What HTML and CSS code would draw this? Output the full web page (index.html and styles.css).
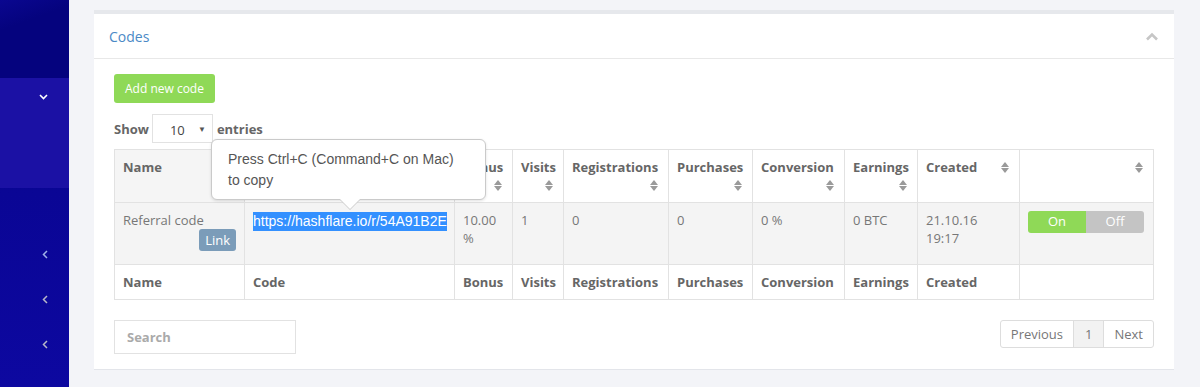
FILE: index.html
```html
<!DOCTYPE html>
<html lang="en">
<head>
    <meta charset="UTF-8">
    <meta name="viewport" content="width=device-width, initial-scale=1.0">
    <title>Codes</title>
    <link rel="stylesheet" href="styles.css">
</head>
<body>

<aside class="sidebar">
    <div class="sidebar-top"></div>
    <div class="nav-active">
        <svg class="chev" width="9" height="6" viewBox="0 0 9 6"><path d="M1 1l3.5 3.5L8 1" fill="none" stroke="#fff" stroke-width="1.6"/></svg>
    </div>
    <div class="nav-list">
        <div class="nav-item"><svg width="6" height="9" viewBox="0 0 6 9"><path d="M5 1L1.5 4.5 5 8" fill="none" stroke="#9fb0e8" stroke-width="1.5"/></svg></div>
        <div class="nav-item"><svg width="6" height="9" viewBox="0 0 6 9"><path d="M5 1L1.5 4.5 5 8" fill="none" stroke="#b7b7c8" stroke-width="1.5"/></svg></div>
        <div class="nav-item"><svg width="6" height="9" viewBox="0 0 6 9"><path d="M5 1L1.5 4.5 5 8" fill="none" stroke="#b7b7c8" stroke-width="1.5"/></svg></div>
    </div>
</aside>

<main class="content">
    <div class="panel">
        <div class="panel-heading">
            <span class="panel-title">Codes</span>
            <svg width="14" height="9" viewBox="0 0 14 9"><path d="M2 7.5l5-5 5 5" fill="none" stroke="#c6c6c6" stroke-width="2.6"/></svg>
        </div>
        <div class="panel-body">
            <button class="btn-add">Add new code</button>

            <div class="length">
                Show
                <span class="select">10 <span class="caret">&#9660;</span></span>
                entries
            </div>

            <div class="table-wrap">
                <table class="codes">
                    <colgroup>
                        <col style="width:130px"><col style="width:210px"><col style="width:58px">
                        <col style="width:51px"><col style="width:105px"><col style="width:84px">
                        <col style="width:92px"><col style="width:73px"><col style="width:102px">
                        <col style="width:134px">
                    </colgroup>
                    <thead>
                        <tr>
                            <th class="sorted">Name</th>
                            <th>Code</th>
                            <th>Bonus <span class="sort block"></span></th>
                            <th>Visits <span class="sort block"></span></th>
                            <th>Registrations <span class="sort block"></span></th>
                            <th>Purchases <span class="sort block"></span></th>
                            <th>Conversion <span class="sort block"></span></th>
                            <th>Earnings <span class="sort block"></span></th>
                            <th><span class="sort side"></span>Created</th>
                            <th><span class="sort side"></span></th>
                        </tr>
                    </thead>
                    <tbody>
                        <tr>
                            <td>Referral code<div class="right"><span class="badge">Link</span></div></td>
                            <td><span class="selected">https://hashflare.io/r/54A91B2E</span></td>
                            <td>10.00 %</td>
                            <td>1</td>
                            <td>0</td>
                            <td>0</td>
                            <td>0 %</td>
                            <td>0 BTC</td>
                            <td>21.10.16 19:17</td>
                            <td><span class="toggle"><span class="on">On</span><span class="off">Off</span></span></td>
                        </tr>
                    </tbody>
                    <tfoot>
                        <tr>
                            <th>Name</th>
                            <th>Code</th>
                            <th>Bonus</th>
                            <th>Visits</th>
                            <th>Registrations</th>
                            <th>Purchases</th>
                            <th>Conversion</th>
                            <th>Earnings</th>
                            <th>Created</th>
                            <th></th>
                        </tr>
                    </tfoot>
                </table>

                <div class="copy-tip">Press Ctrl+C (Command+C on Mac)<br>to copy</div>
            </div>

            <div class="table-footer">
                <input class="search" type="text" placeholder="Search">
                <div class="pager">
                    <span>Previous</span>
                    <span class="current">1</span>
                    <span>Next</span>
                </div>
            </div>
        </div>
    </div>
</main>

</body>
</html>
```

FILE: styles.css
```css
/* page */
body {
    margin: 0;
    padding: 0;
    font-family: "Open Sans", Arial, sans-serif;
    font-size: 13px;
    background-color: #f3f4f8;
    display: flex;
    height: 387px;
    overflow: hidden;
}

/* sidebar */
.sidebar {
    width: 69px;
    flex-shrink: 0;
    background: linear-gradient(180deg, #07048a 0%, #0d08a0 100%);
}
.sidebar-top {
    height: 78px;
    background: linear-gradient(160deg, #0a0790 0%, #05037e 30%, #05037e 100%);
}
.nav-active {
    height: 110px;
    background-color: #1b11a4;
    display: flex;
    justify-content: flex-end;
    align-items: flex-start;
    padding: 16px 21px 0 0;
    box-sizing: border-box;
}
.nav-list {
    padding-top: 44px;
}
.nav-item {
    height: 45px;
    display: flex;
    align-items: center;
    justify-content: flex-end;
    padding-right: 21px;
}

/* panel */
.content {
    flex: 1;
    padding: 10px 27px 0 25px;
}
.panel {
    background-color: #fff;
    border-top: 4px solid #e6e8ec;
    border-bottom: 1px solid #e3e5ea;
}
.panel-heading {
    height: 44px;
    padding: 0 15px;
    border-bottom: 1px solid #e8e8e8;
    display: flex;
    align-items: center;
    justify-content: space-between;
}
.panel-title {
    font-size: 14px;
    color: #4a89c6;
}
.panel-body {
    padding: 15px 20px 15px 20px;
}

.btn-add {
    background-color: #8fd957;
    color: #fff;
    border: none;
    border-radius: 3px;
    font-family: "Open Sans", Arial, sans-serif;
    font-size: 12px;
    height: 29px;
    padding: 0 11px;
    cursor: pointer;
}

.length {
    margin-top: 11px;
    display: flex;
    align-items: center;
    font-weight: bold;
    color: #666;
}
.select {
    width: 61px;
    height: 29px;
    box-sizing: border-box;
    border: 1px solid #e2e2e2;
    margin: 0 4px 0 3px;
    display: flex;
    align-items: center;
    justify-content: space-between;
    padding: 2px 6px 0 17px;
    font-weight: normal;
    color: #444;
}
.caret {
    font-size: 8px;
    color: #555;
    margin-top: -3px;
}

/* table */
.table-wrap {
    position: relative;
    margin-top: 6px;
}
.codes {
    width: 100%;
    table-layout: fixed;
    border-collapse: collapse;
    border: 1px solid #e2e2e2;
}
.codes th,
.codes td {
    border: 1px solid #e2e2e2;
    padding: 8px 8px;
    line-height: 18px;
    text-align: left;
    vertical-align: top;
}
.codes th {
    color: #666;
    font-weight: bold;
}
.codes thead th {
    height: 36px;
}
.codes thead th.sorted {
    background-color: #f5f5f5;
}
.codes td {
    color: #777;
    background-color: #f4f4f4;
    height: 45px;
}
.sort {
    position: relative;
    width: 8px;
    height: 11px;
}
.sort::before,
.sort::after {
    content: "";
    position: absolute;
    left: 0;
    border-left: 4px solid transparent;
    border-right: 4px solid transparent;
}
.sort::before {
    top: 0;
    border-bottom: 5px solid #9a9a9a;
}
.sort::after {
    top: 6px;
    border-top: 5px solid #9a9a9a;
}
.sort.block {
    display: block;
    margin: 4px 2px 0 auto;
}
.sort.side {
    float: right;
    margin: 4px 2px 0 0;
}
.right {
    text-align: right;
}
.badge {
    display: inline-block;
    background-color: #7b9cb9;
    color: #fff;
    border-radius: 3px;
    padding: 2px 6px;
    line-height: 18px;
}
.selected {
    display: inline-block;
    font-family: "Liberation Sans", Arial, sans-serif;
    font-size: 14px;
    line-height: 19px;
    background-color: #3390ff;
    color: #fff;
    margin-top: 1px;
}
.toggle {
    display: flex;
    width: 116px;
    height: 22px;
    border-radius: 3px;
    overflow: hidden;
    color: #fff;
}
.toggle span {
    flex: 1;
    text-align: center;
    line-height: 21px;
}
.toggle .on {
    background-color: #8fd957;
}
.toggle .off {
    background-color: #c4c4c4;
}

/* copy tooltip */
.copy-tip {
    position: absolute;
    left: 97px;
    top: -10px;
    width: 275px;
    height: 61px;
    box-sizing: border-box;
    padding: 9px 16px 0 16px;
    background-color: #fff;
    border: 1px solid #cacaca;
    border-radius: 6px;
    box-shadow: 0 1px 3px rgba(0, 0, 0, 0.12);
    font-family: "Liberation Sans", Arial, sans-serif;
    font-size: 14px;
    line-height: 21px;
    color: #555;
}
.copy-tip::before,
.copy-tip::after {
    content: "";
    position: absolute;
    left: 127px;
    top: 100%;
    border: 11px solid transparent;
    border-bottom: none;
}
.copy-tip::before {
    border-top: 11px solid #cacaca;
}
.copy-tip::after {
    border-top: 11px solid #fff;
    margin-top: -1px;
}

/* footer */
.table-footer {
    margin-top: 20px;
    display: flex;
    justify-content: space-between;
    align-items: flex-start;
}
.search {
    width: 182px;
    height: 34px;
    box-sizing: border-box;
    border: 1px solid #e2e2e2;
    padding: 0 12px;
    font-family: "Open Sans", Arial, sans-serif;
    font-size: 13px;
}
.search::placeholder {
    color: #aaa;
    font-weight: bold;
}
.pager {
    display: flex;
    border: 1px solid #ddd;
    border-radius: 3px;
    color: #777;
}
.pager span {
    padding: 4px 10px;
    line-height: 18px;
}
.pager span + span {
    border-left: 1px solid #ddd;
}
.pager .current {
    background-color: #f2f2f2;
    padding: 4px 11px;
}
```
